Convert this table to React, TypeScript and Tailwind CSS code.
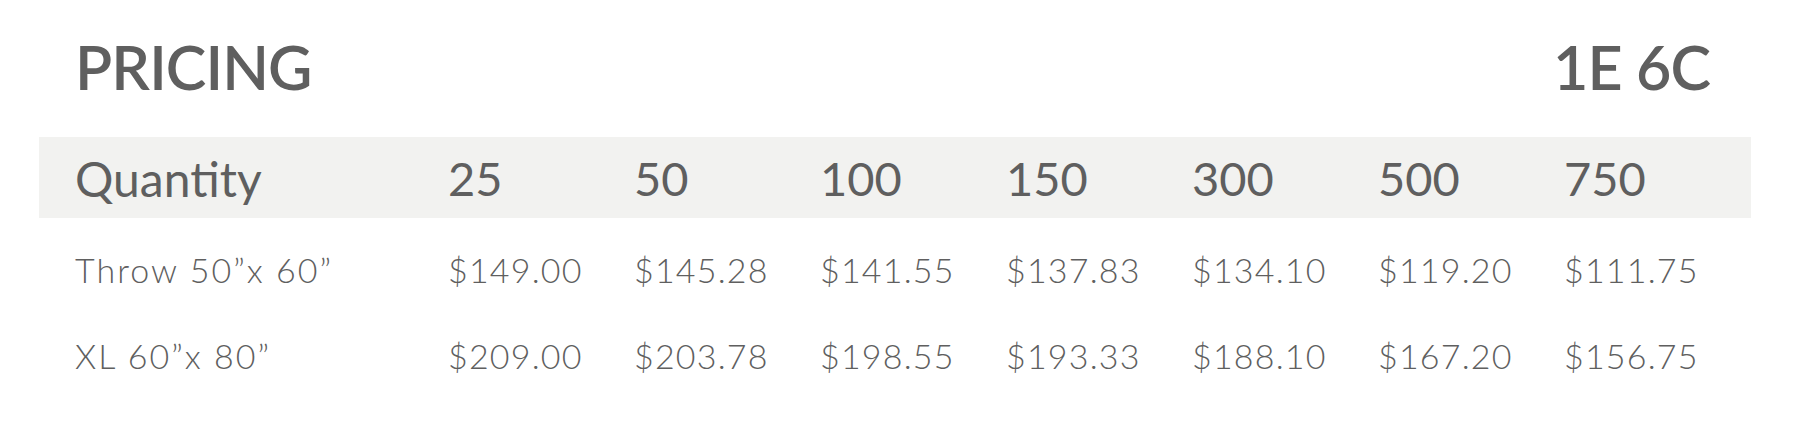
import React from "react";

const quantities = ["25", "50", "100", "150", "300", "500", "750"];

const rows = [
  {
    label: "Throw 50”x 60”",
    prices: ["$149.00", "$145.28", "$141.55", "$137.83", "$134.10", "$119.20", "$111.75"],
  },
  {
    label: "XL 60”x 80”",
    prices: ["$209.00", "$203.78", "$198.55", "$193.33", "$188.10", "$167.20", "$156.75"],
  },
];

const gridCols = "grid grid-cols-[373px_repeat(7,186px)]";

const App = () => {
  return (
    <div className="w-full h-[434px] bg-white pl-[39px] pr-[47px] pt-[36px] text-[#5f5f5f] font-['Lato','Open_Sans',sans-serif]">
      {/* title row */}
      <div className="flex justify-between items-start px-[36px] pr-[41px]">
        <h1 className="text-[61px] leading-none font-semibold tracking-[-0.015em]">PRICING</h1>
        <p className="text-[61px] leading-none font-semibold tracking-[-0.015em]">1E 6C</p>
      </div>

      {/* quantity header band */}
      <div className={`${gridCols} mt-[40px] h-[81px] bg-[#f2f2f0] pl-[36px]`}>
        <span className="text-[48px] leading-[83px] font-normal">Quantity</span>
        {quantities.map((q) => (
          <span key={q} className="text-[47px] leading-[83px] font-normal">
            {q}
          </span>
        ))}
      </div>

      {/* price rows */}
      <div className="mt-[9px] pl-[36px]">
        {rows.map((row) => (
          <div key={row.label} className={`${gridCols} h-[86px] items-center`}>
            <span className="text-[34px] font-light tracking-[0.06em] leading-none">{row.label}</span>
            {row.prices.map((p) => (
              <span key={p} className="text-[34px] font-light tracking-[0.035em] leading-none">
                {p}
              </span>
            ))}
          </div>
        ))}
      </div>
    </div>
  );
};

export default App;
